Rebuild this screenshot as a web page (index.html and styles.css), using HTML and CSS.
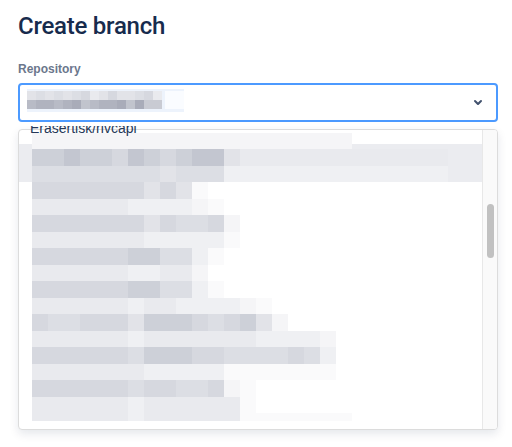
FILE: index.html
```html
<!DOCTYPE html>
<html lang="en">
<head>
    <meta charset="UTF-8">
    <meta name="viewport" content="width=device-width, initial-scale=1.0">
    <title>Create branch</title>
    <link rel="stylesheet" href="styles.css">
</head>
<body>
    <div id="dialog">
        <h1 class="title">Create branch</h1>
        <label class="field-label" for="repo">Repository</label>
        <div class="select" id="repo">
            <div class="value">
                <div class="value-blur" id="value-blur"></div>
                <div class="value-tail"></div>
            </div>
            <svg class="chevron" width="24" height="24" viewBox="0 0 24 24">
                <path d="M8.292 10.293a1.009 1.009 0 0 0 0 1.419l2.939 2.965c.218.215.5.322.779.322s.556-.107.769-.322l2.93-2.955a1.01 1.01 0 0 0 0-1.419.987.987 0 0 0-1.406 0l-2.298 2.317-2.307-2.327a.99.99 0 0 0-1.406 0z" fill="currentColor"/>
            </svg>
        </div>
        <div class="menu-area">
            <span class="peek">Erasertisk/rivcapi</span>
            <div class="menu">
                <div class="menu-list" id="menu-list"></div>
                <div class="scrollbar"><div class="thumb"></div></div>
            </div>
        </div>
    </div>

    <script>
        // blurred (pixelated) repo names, one char per 16px block
        const listRows = [
            '88888888888888888888',
            '22122312321156666666666666',
            '44444444544477777777777777',
            '33333335359',
            '666666777789',
            '3333333534438',
            '6666666777779',
            '333333224479',
            '66666677668',
            '333333224479',
            '666666766777789',
            '3443335222343258',
            '6666667666666677778',
            '3333334222334444347',
            '6666666777779999999',
            '33333343344389',
            '66666676666669',
            '66666676666669999999'
        ];
        const valueRows = ['545454365355436', 'cbbcbadcbbadaee'];

        function buildRow(tones, cls) {
            const row = document.createElement('div');
            row.classList.add(cls);
            for (const t of tones) {
                const block = document.createElement('span');
                block.classList.add('t' + t);
                row.appendChild(block);
            }
            return row;
        }

        const menuList = document.getElementById('menu-list');
        let hoverItem = null;
        listRows.forEach((tones, i) => {
            const row = buildRow(tones, 'blur-row');
            if (i === 1 || i === 2) {
                if (!hoverItem) {
                    hoverItem = document.createElement('div');
                    hoverItem.classList.add('hover-item');
                    menuList.appendChild(hoverItem);
                }
                hoverItem.appendChild(row);
            } else {
                menuList.appendChild(row);
            }
        });

        const valueBlur = document.getElementById('value-blur');
        valueRows.forEach(tones => valueBlur.appendChild(buildRow(tones, 'value-row')));
    </script>
</body>
</html>
```

FILE: styles.css
```css
body {
    margin: 0;
    background-color: #fff;
    font-family: "Liberation Sans", Arial, sans-serif;
    color: #172b4d;
}
#dialog {
    display: flex;
    flex-direction: column;
    padding: 0 14px 0 18px;
}
.title {
    margin: 12px 0 0;
    font-family: Roboto, "Liberation Sans", sans-serif;
    font-size: 24px;
    font-weight: 500;
    line-height: 28px;
    letter-spacing: -0.01em;
    color: #172b4d;
}
.field-label {
    margin-top: 21px;
    font-size: 12px;
    font-weight: bold;
    line-height: 16px;
    color: #6b778c;
}
.select {
    margin-top: 6px;
    height: 39px;
    box-sizing: border-box;
    border: 2px solid #4c9aff;
    border-radius: 4px;
    display: flex;
    align-items: flex-start;
    justify-content: space-between;
    padding: 4px 6px 0 7px;
}
.value {
    display: flex;
    background-color: #edf3fc;
    padding: 2px 0 3px;
}
.value-row {
    display: flex;
    height: 9px;
}
.value-row span {
    width: 9px;
}
.value-tail {
    width: 19px;
    margin: 0 0 0 3px;
    background-color: #fafcff;
}
.chevron {
    margin-top: 1px;
    color: #42526e;
}
/* the list is scrolled: the item above the menu is clipped to its lower half */
.menu-area {
    position: relative;
    margin: 4px -14px 0 -18px;
    padding: 3px 14px 14px 18px;
    overflow: hidden;
}
.peek {
    position: absolute;
    top: -6px;
    left: 30px;
    font-size: 14px;
    line-height: 16px;
    color: #253858;
}
.menu {
    display: flex;
    height: 301px;
    box-sizing: border-box;
    border: 1px solid #dcdcdc;
    border-radius: 4px;
    box-shadow: 0 4px 10px rgba(9, 30, 66, 0.1);
    background-color: #fff;
    overflow: hidden;
}
.menu-list {
    flex: 1;
    height: 291px;
    padding-top: 2.5px;
    box-sizing: border-box;
    overflow: hidden;
}
.blur-row {
    display: flex;
    height: 16.5px;
    padding-left: 13px;
}
.blur-row span {
    width: 16px;
    flex: none;
}
.hover-item {
    background-color: #ebecf0;
    margin-top: -5px;
    padding-top: 5px;
}
.scrollbar {
    width: 14px;
    border-left: 1px solid #e8e8e8;
    background-color: #fafafa;
    display: flex;
    justify-content: center;
    padding-top: 74px;
}
.thumb {
    width: 7px;
    height: 54px;
    border-radius: 4px;
    background-color: #c1c1c1;
}
.t1 { background-color: #c3c6d0; }
.t2 { background-color: #cdd0d8; }
.t3 { background-color: #d6d8df; }
.t4 { background-color: #dcdee4; }
.t5 { background-color: #e2e3e8; }
.t6 { background-color: #e9eaee; }
.t7 { background-color: #eff0f3; }
.t8 { background-color: #f5f5f7; }
.t9 { background-color: #fafafb; }
.ta { background-color: #a9acb9; }
.tb { background-color: #b0b3bf; }
.tc { background-color: #b8bbc6; }
.td { background-color: #c1c4cd; }
.te { background-color: #c9cbd3; }
```
